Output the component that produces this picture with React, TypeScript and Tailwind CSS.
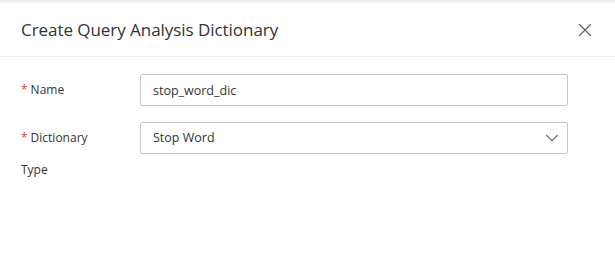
import { X, ChevronDown } from 'lucide-react';

export default function App() {
  return (
    <div className="w-[615px] h-[279px] bg-white overflow-hidden relative" style={{ fontFamily: '"Open Sans", "Noto Sans", sans-serif' }}>
      {/* top shadow */}
      <div className="h-[4px] bg-gradient-to-b from-[#e9e9e9] to-white" />

      {/* Header */}
      <div className="h-[53px] flex items-center justify-between pl-[21px] pr-[19px] border-b border-[#ececec]">
        <h2 className="text-[17px] text-[#333] tracking-[-0.05px]">Create Query Analysis Dictionary</h2>
        <X className="w-[22px] h-[22px] text-[#666]" strokeWidth={1.3} />
      </div>

      {/* Form */}
      <div className="pt-[17px] flex flex-col gap-[16px] pr-[47px]">
        <div className="flex items-start">
          <label className="w-[140px] shrink-0 pl-[21px] pr-[44px] text-[12px] text-[#333] leading-[32px]">
            <span className="text-[#e4393c] mr-[3px]">*</span>Name
          </label>
          <input
            defaultValue="stop_word_dic"
            className="flex-1 min-w-0 h-[32px] border border-[#c4c6cc] rounded-[2px] px-[12px] text-[12.5px] text-[#333] outline-none"
          />
        </div>
        <div className="flex items-start">
          <label className="w-[140px] shrink-0 pl-[21px] pr-[44px] text-[12px] text-[#333] leading-[32px]">
            <span className="text-[#e4393c] mr-[3px]">*</span>Dictionary Type
          </label>
          <div className="flex-1 h-[32px] border border-[#c4c6cc] rounded-[2px] pl-[12px] pr-[4px] flex items-center justify-between text-[12.5px] text-[#333]">
            <span>Stop Word</span>
            <ChevronDown className="w-[22px] h-[22px] text-[#777]" strokeWidth={1.3} />
          </div>
        </div>
      </div>
    </div>
  );
}
